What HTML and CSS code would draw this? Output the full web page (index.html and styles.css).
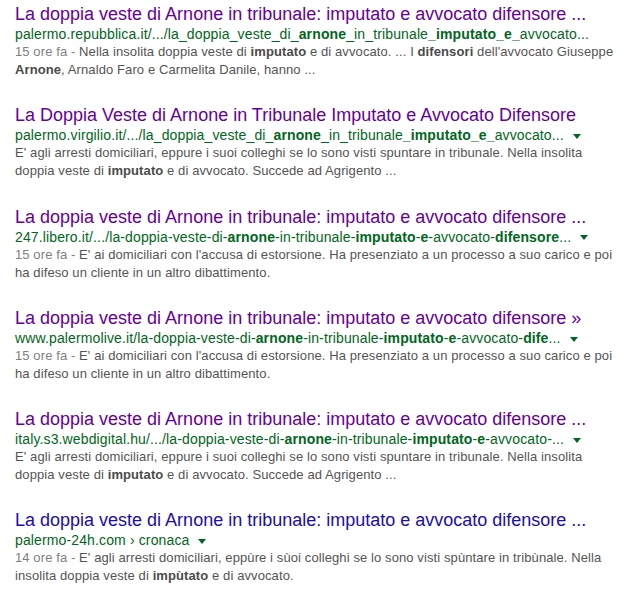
FILE: index.html
```html
<!DOCTYPE html>
<html lang="it">
<head>
  <meta charset="UTF-8" />
  <title>Arnone - Risultati</title>
  <link rel="stylesheet" href="styles.css">
</head>
<body>
  <div class="results">

    <div class="g">
      <h3 class="r visited">La doppia veste di Arnone in tribunale: imputato e avvocato difensore ...</h3>
      <div class="url">palermo.repubblica.it/.../la_doppia_veste_di_<b>arnone</b>_in_tribunale<b>_imputato_e_</b>avvocato...</div>
      <div class="st"><span class="date">15 ore fa - </span>Nella insolita doppia veste di <b>imputato</b> e di avvocato. ... I <b>difensori</b> dell'avvocato Giuseppe <b>Arnone</b>, Arnaldo Faro e Carmelita Danile, hanno ...</div>
    </div>

    <div class="g">
      <h3 class="r visited">La Doppia Veste di Arnone in Tribunale Imputato e Avvocato Difensore</h3>
      <div class="url">palermo.virgilio.it/.../la_doppia_veste_di_<b>arnone</b>_in_tribunale<b>_imputato_e_</b>avvocato... <span class="arrow"></span></div>
      <div class="st">E' agli arresti domiciliari, eppure i suoi colleghi se lo sono visti spuntare in tribunale. Nella insolita doppia veste di <b>imputato</b> e di avvocato. Succede ad Agrigento ...</div>
    </div>

    <div class="g">
      <h3 class="r visited">La doppia veste di Arnone in tribunale: imputato e avvocato difensore ...</h3>
      <div class="url">247.libero.it/.../la-doppia-veste-di-<b>arnone</b>-in-tribunale-<b>imputato</b>-<b>e</b>-avvocato-<b>difensore</b>... <span class="arrow"></span></div>
      <div class="st"><span class="date">15 ore fa - </span>E' ai domiciliari con l'accusa di estorsione. Ha presenziato a un processo a suo carico e poi ha difeso un cliente in un altro dibattimento.</div>
    </div>

    <div class="g">
      <h3 class="r visited">La doppia veste di Arnone in tribunale: imputato e avvocato difensore »</h3>
      <div class="url">www.palermolive.it/la-doppia-veste-di-<b>arnone</b>-in-tribunale-<b>imputato</b>-<b>e</b>-avvocato-<b>dife</b>... <span class="arrow"></span></div>
      <div class="st"><span class="date">15 ore fa - </span>E' ai domiciliari con l'accusa di estorsione. Ha presenziato a un processo a suo carico e poi ha difeso un cliente in un altro dibattimento.</div>
    </div>

    <div class="g">
      <h3 class="r visited">La doppia veste di Arnone in tribunale: imputato e avvocato difensore ...</h3>
      <div class="url">italy.s3.webdigital.hu/.../la-doppia-veste-di-<b>arnone</b>-in-tribunale-<b>imputato</b>-<b>e</b>-avvocato-... <span class="arrow"></span></div>
      <div class="st">E' agli arresti domiciliari, eppure i suoi colleghi se lo sono visti spuntare in tribunale. Nella insolita doppia veste di <b>imputato</b> e di avvocato. Succede ad Agrigento ...</div>
    </div>

    <div class="g">
      <h3 class="r">La doppia veste di Arnone in tribunale: imputato e avvocato difensore ...</h3>
      <div class="url">palermo-24h.com › cronaca <span class="arrow"></span></div>
      <div class="st"><span class="date">14 ore fa - </span>E' agli arresti domiciliari, eppùre i sùoi colleghi se lo sono visti spùntare in tribùnale. Nella insolita doppia veste di <b>impùtato</b> e di avvocato.</div>
    </div>

  </div>
</body>
</html>
```

FILE: styles.css
```css
body {
  margin: 0;
  padding: 0;
  background: #fff;
  font-family: 'Liberation Sans', Arial, sans-serif;
}

.results {
  padding: 3px 15px 0 15px;
  width: 600px;
}

.g {
  margin-bottom: 25.3px;
}

.r {
  margin: 0;
  font-size: 18px;
  font-weight: normal;
  line-height: 22px;
  color: #1a0dab;
  white-space: nowrap;
}

.r.visited {
  color: #609;
}

.url {
  font-size: 14px;
  line-height: 18px;
  letter-spacing: 0.13px;
  color: #006621;
  white-space: nowrap;
}

.url b {
  font-weight: bold;
}

.arrow {
  display: inline-block;
  width: 0;
  height: 0;
  margin-left: 5px;
  vertical-align: middle;
  border-left: 4px solid transparent;
  border-right: 4px solid transparent;
  border-top: 5px solid #006621;
}

.st {
  font-size: 13px;
  line-height: 18px;
  letter-spacing: 0.1px;
  color: #545454;
}

.st b {
  color: #4a4a4a;
}

.date {
  color: #808080;
}
```
